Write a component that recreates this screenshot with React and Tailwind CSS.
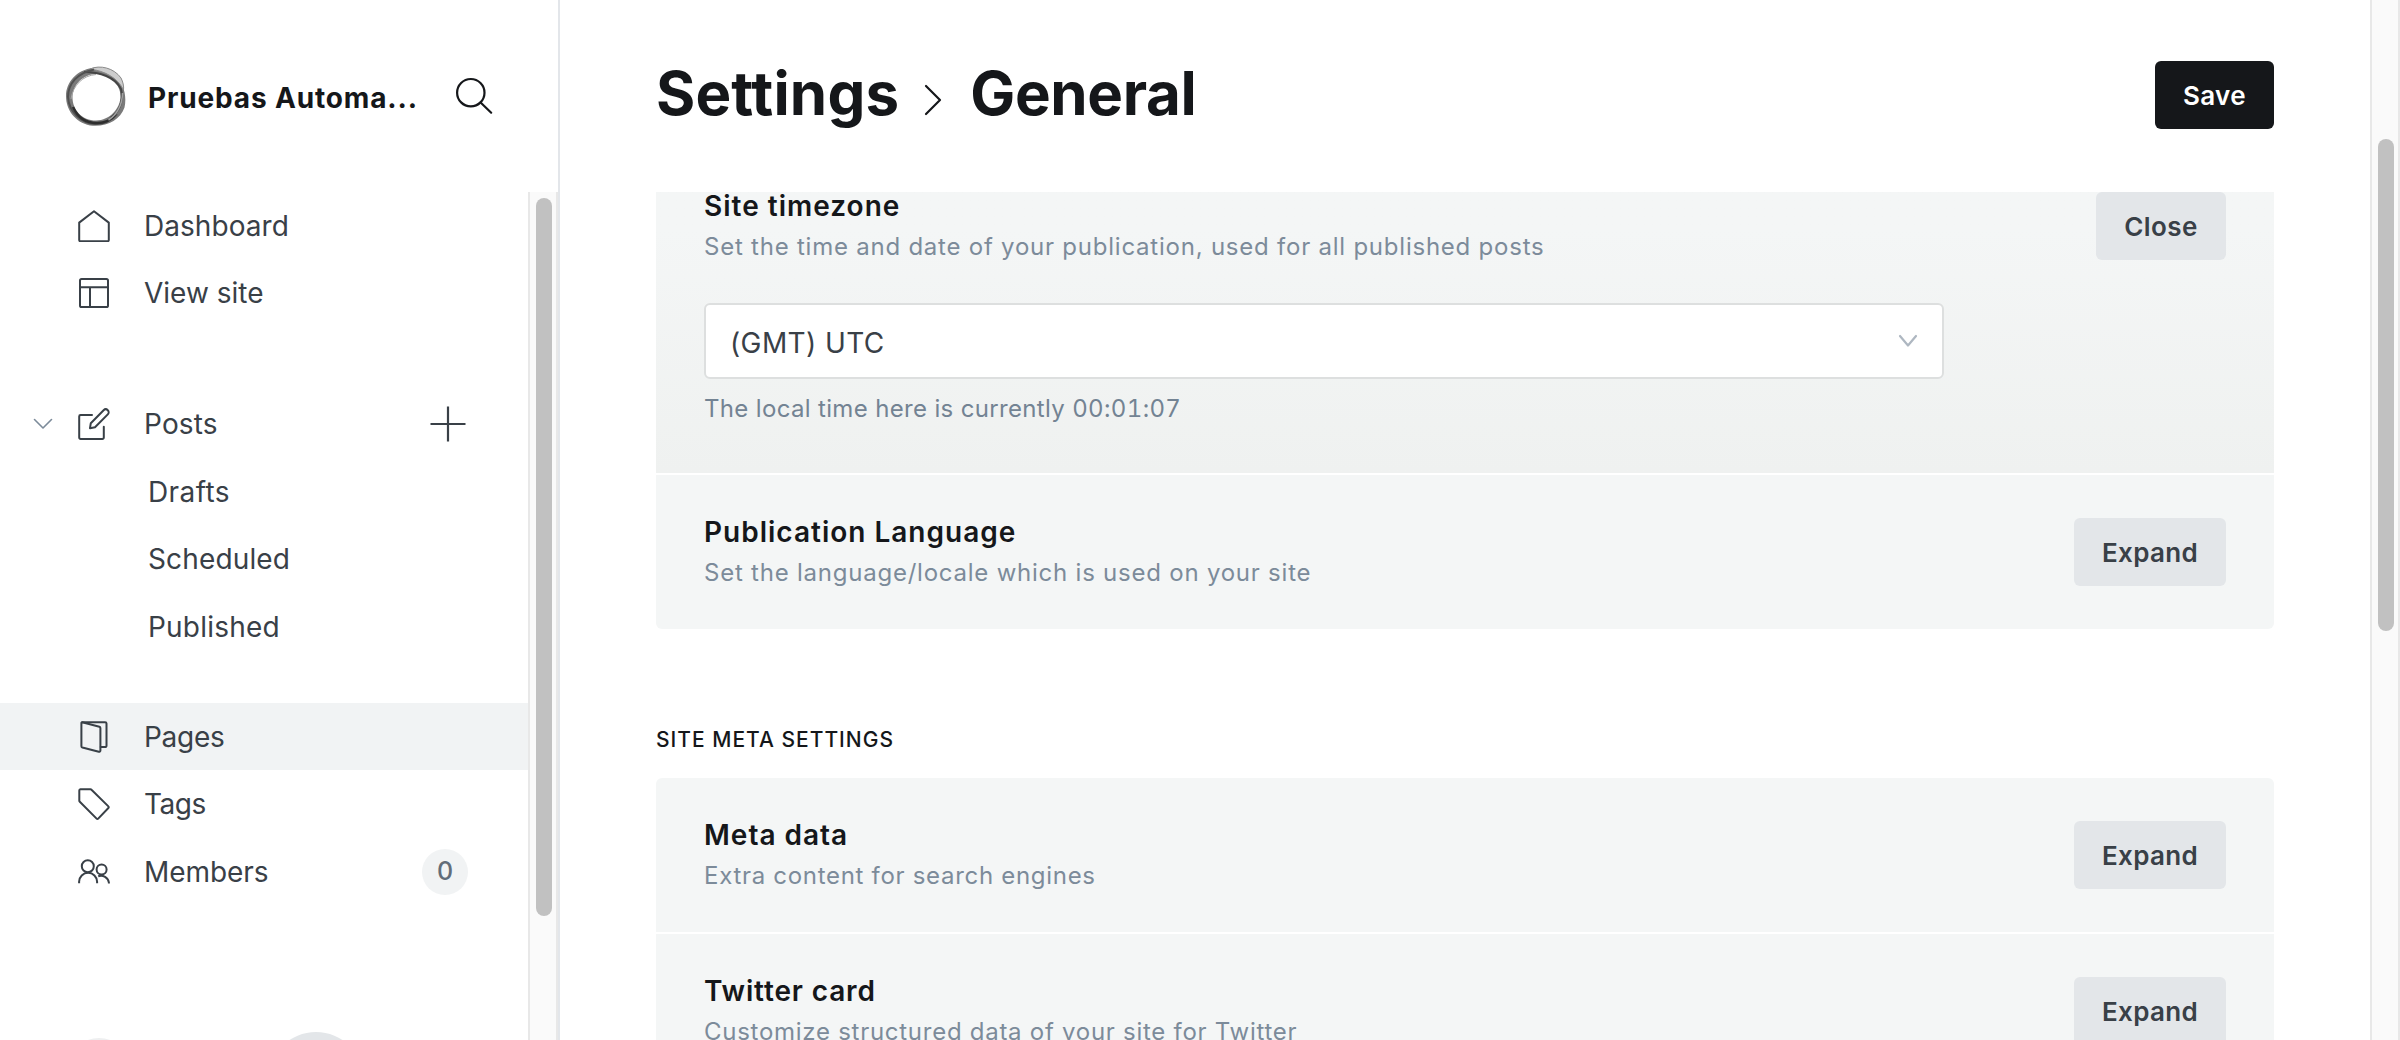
import React from "react";

const Icon = ({ children, className = "", size = 32 }) => (
  <svg
    width={size}
    height={size}
    viewBox={`0 0 ${size} ${size}`}
    fill="none"
    stroke="currentColor"
    strokeWidth="2"
    strokeLinecap="round"
    strokeLinejoin="round"
    className={`shrink-0 ${className}`}
  >
    {children}
  </svg>
);

const HomeIcon = () => (
  <Icon>
    <path d="M1.2 12.6 16 1.2l14.8 11.4V30a1.2 1.2 0 0 1-1.2 1.2H2.4A1.2 1.2 0 0 1 1.2 30Z" />
  </Icon>
);

const LayoutIcon = () => (
  <Icon>
    <rect x="2" y="2" width="28" height="28" rx="1.6" />
    <path d="M2 10.2h28M12 10.2V30" />
  </Icon>
);

const EditIcon = () => (
  <Icon>
    <path d="M14 7H2.6a1.4 1.4 0 0 0-1.4 1.4v21.2A1.4 1.4 0 0 0 2.6 31h21.8a1.4 1.4 0 0 0 1.4-1.4V18.8" />
    <path d="m12 20.2.8-5L25.6 2.2a2.9 2.9 0 0 1 4.2 4.2L17 19.2Z" />
  </Icon>
);

const PagesIcon = () => (
  <Icon className="mt-[2px]">
    <path d="M4.2 1.2 21.4 5.8a1.4 1.4 0 0 1 1 1.3v22.4a1.3 1.3 0 0 1-1.6 1.3L4.4 26.5a1.4 1.4 0 0 1-1-1.3V2a.8.8 0 0 1 .8-.8Z" />
    <path d="M4.2 1.2h22.9a1.4 1.4 0 0 1 1.4 1.4v22.1a1.4 1.4 0 0 1-1.4 1.4h-4.4" />
  </Icon>
);

const TagIcon = () => (
  <Icon>
    <path d="M2.4 1.2h10a1.6 1.6 0 0 1 1.1.5l16.9 16.7a1.1 1.1 0 0 1 0 1.6L20.2 30.6a1.1 1.1 0 0 1-1.6 0L1.8 13.8a1.8 1.8 0 0 1-.5-1.2V2.4a1.2 1.2 0 0 1 1.1-1.2Z" />
  </Icon>
);

const MembersIcon = () => (
  <Icon className="mt-[2px]">
    <circle cx="9.8" cy="10.2" r="6" />
    <path d="M1.1 27.2v-1.4a9 9 0 0 1 18 0v1.4" strokeLinecap="butt" />
    <circle cx="23.6" cy="13.6" r="5" />
    <path d="M20.2 20.2a8 8 0 0 1 10.7 6.4v.8" strokeLinecap="butt" />
  </Icon>
);

function NavItem({ icon, label, tracking = "tracking-[0.15px]", active, before, after }) {
  return (
    <a className={`flex h-[67.2px] items-center ${active ? "bg-[#f1f3f4]" : ""}`}>
      <span className="flex w-[78px] shrink-0 items-center pl-[33px]">{before}</span>
      {icon}
      <span className={`ml-[34px] flex-1 pt-px ${tracking}`}>{label}</span>
      {after}
    </a>
  );
}

const SubItem = ({ label, tracking }) => (
  <a className={`flex h-[67.2px] items-center pt-[2px] pl-[148px] ${tracking}`}>{label}</a>
);

const Logo = () => (
  <svg width="62" height="62" viewBox="0 0 62 62" fill="none" className="shrink-0">
    <path
      fillRule="evenodd"
      fill="#7a7a7a"
      d="M27 3C12 5 1 17 1 31s9 26 24 29.500c16 2 30-5 34.500-18C62 31 59 18 49 10 42 5 35 2 27 3ZM31.500 9C44 9 55.500 19 55.500 31S45 55.500 31 55.500 7.500 45 7.500 32.500 18 9 31.500 9Z"
    />
    <path d="M25 4C35-.500 49 3 56 13c2 4 3 8 2.500 12C53 13 40 6 25 4Z" fill="#cdcdcd" stroke="#8a8a8a" strokeWidth="1" />
    <path d="M19 7c16 0 31 5 37 17 3 12-2 24-11 29" stroke="#454545" strokeWidth="2" />
    <path d="M29 4.500C12 8 3 19 3 32c1 15 13 26 27 27 9 0 17-4 22-10" stroke="#505050" strokeWidth="2" />
    <path d="M8 42c5 11 13 16 24 16 8 0 14-3 18-8" stroke="#2e2e2e" strokeWidth="2.500" />
    <path d="M31 9.500C18 10.500 8 20 6 34" stroke="#a8a8a8" strokeWidth="1" />
    <path d="M57.500 28c0 12-6 22-14 27" stroke="#a2a2a2" strokeWidth="1.500" />
  </svg>
);

function Sidebar() {
  return (
    <aside className="flex h-full w-[560px] shrink-0 flex-col border-r-2 border-[#e3e6ea] text-[28px] text-[#394047]">
      <header className="flex h-[192px] shrink-0 items-start pl-[65px] pt-[65px]">
        <Logo />
        <div className="ml-[21px] mt-[13px] w-[290px] text-[28px] leading-[40px] font-bold tracking-[0.85px] whitespace-nowrap text-[#15171a]">
          Pruebas Automa...
        </div>
        <Icon size={40} className="ml-[16px] mt-[11px] text-[#15171a]">
          <g strokeWidth="2.2">
            <circle cx="16.8" cy="16.7" r="13.7" />
            <path d="m26.6 26.5 10.6 10.2" />
          </g>
        </Icon>
      </header>
      <div className="flex min-h-0 flex-1">
        <nav className="min-w-0 flex-1 overflow-hidden">
          <NavItem icon={<HomeIcon />} label="Dashboard" tracking="tracking-[0.05px]" />
          <NavItem icon={<LayoutIcon />} label="View site" tracking="tracking-[0px]" />
          <div className="mt-[64px]">
            <NavItem
              icon={<EditIcon />}
              label="Posts"
              before={
                <svg width="20" height="12" viewBox="0 0 20 12" fill="none" stroke="#7c8b9a" strokeWidth="1.6" strokeLinecap="round" strokeLinejoin="round">
                  <path d="m1.5 1.5 8.5 8.5 8.5-8.5" />
                </svg>
              }
              after={
                <Icon size={36} className="mr-[62px]">
                  <path d="M18 .5v35M.5 18h35" strokeWidth="2.2" strokeLinecap="butt" />
                </Icon>
              }
            />
            <SubItem label="Drafts" tracking="tracking-[0.4px]" />
            <SubItem label="Scheduled" tracking="tracking-[0.15px]" />
            <SubItem label="Published" tracking="tracking-[0.2px]" />
          </div>
          <div className="mt-[43.6px]">
            <NavItem icon={<PagesIcon />} label="Pages" tracking="tracking-[-0.3px]" active />
            <NavItem icon={<TagIcon />} label="Tags" tracking="tracking-[-0.5px]" />
            <NavItem
              icon={<MembersIcon />}
              label="Members"
              tracking="mt-[2px] tracking-[-0.05px]"
              after={
                <span className="mt-[2px] mr-[60px] flex h-[46px] w-[46px] items-center justify-center rounded-full bg-[#f1f3f4] pt-px text-[25px] font-medium text-[#626d79]">
                  0
                </span>
              }
            />
          </div>
          <div className="mt-[128px] flex items-start pl-[67px]">
            <span className="mt-[6px] h-[64px] w-[64px] rounded-full bg-[#eeeff0]" />
            <span className="ml-[137px] h-[96px] w-[96px] rounded-full bg-[#e3e6e9]" />
          </div>
        </nav>
        <div className="w-[30px] shrink-0 border-x-2 border-[#e8e8e8] bg-[#fafafa] pt-[6px] pl-[6px]">
          <div className="h-[718px] w-[16px] rounded-full bg-[#c1c1c1]" />
        </div>
      </div>
    </aside>
  );
}

const GreyButton = ({ children, className }) => (
  <button
    className={`flex h-[68px] shrink-0 items-center justify-center rounded-[6px] bg-[#e3e6e9] text-[26px] font-semibold text-[#394047] ${className}`}
  >
    {children}
  </button>
);

function SettingHeader({ title, description, action = "Expand", titleTracking = "tracking-[1px]", descTracking = "tracking-[0.77px]" }) {
  return (
    <div className="flex h-[154px] items-start justify-between px-[48px] pt-[43px]">
      <div>
        <h4 className={`text-[28px] leading-[28px] font-semibold text-[#15171a] ${titleTracking}`}>{title}</h4>
        <p className={`mt-[9px] text-[24px] leading-[36px] text-[#7c8b9a] ${descTracking}`}>{description}</p>
      </div>
      <GreyButton className={action === "Close" ? "w-[130px] tracking-[0.4px]" : "w-[152px] tracking-[0.3px]"}>
        {action}
      </GreyButton>
    </div>
  );
}

function Main() {
  return (
    <main className="flex h-full w-[1810px] shrink-0 flex-col pr-[96px] pl-[96px]">
      <header className="flex h-[192px] shrink-0 items-start justify-between pt-[61px]">
        <h2 className="-mt-px flex h-[66px] items-center text-[60px] leading-[66px] font-bold text-[#15171a]">
          <span className="tracking-[0.15px]">Settings</span>
          <svg width="20" height="34" viewBox="0 0 20 34" fill="none" stroke="currentColor" strokeWidth="2.2" strokeLinecap="round" strokeLinejoin="round" className="mt-[13px] ml-[24px]">
            <path d="m3 3 14 14L3 31" />
          </svg>
          <span className="ml-[27px] tracking-[-0.35px]">General</span>
        </h2>
        <button className="h-[68px] w-[119px] rounded-[6px] bg-[#15171a] text-[26px] font-semibold tracking-[0.4px] text-white">
          Save
        </button>
      </header>
      <div className="min-h-0 flex-1 overflow-hidden">
        <section className="-mt-[43px] overflow-hidden rounded-[6px]">
          <div className="h-[324px] bg-linear-to-b from-[#f4f6f6] from-25% to-[#eff1f0]">
            <SettingHeader
              title="Site timezone"
              description="Set the time and date of your publication, used for all published posts"
              action="Close"
            />
            <div className="pl-[48px]">
              <div className="flex h-[76px] w-[1240px] items-center justify-between rounded-[6px] border-2 border-[#dddfdf] bg-white pr-[24px] pl-[24px] text-[28px] tracking-[0.4px] text-[#394047]">
                <span className="pt-[3px]">(GMT) UTC</span>
                <svg width="20" height="14" viewBox="0 0 20 14" fill="none" stroke="#aeb7c1" strokeWidth="2.2" strokeLinecap="round" strokeLinejoin="round">
                  <path d="m2 2 8 9.5L18 2" />
                </svg>
              </div>
              <p className="mt-[12px] text-[24px] leading-[36px] tracking-[0.34px] text-[#738393]">
                The local time here is currently <span className="tracking-[0.35px] tabular-nums">00:01:07</span>
              </p>
            </div>
          </div>
          <div className="mt-[2px] bg-[#f4f6f6]">
            <SettingHeader
              title="Publication Language"
              description="Set the language/locale which is used on your site"
            />
          </div>
        </section>
        <h3 className="mt-[97px] text-[21px] leading-[28px] font-medium tracking-[1px] text-[#15171a]">
          SITE META SETTINGS
        </h3>
        <section className="mt-[24px] overflow-hidden rounded-[6px]">
          <div className="bg-[#f4f6f6]">
            <SettingHeader
              title="Meta data"
              description="Extra content for search engines"
              descTracking="tracking-[0.7px]"
            />
          </div>
          <div className="mt-[2px] bg-[#f4f6f6]">
            <SettingHeader
              title="Twitter card"
              description="Customize structured data of your site for Twitter"
              titleTracking="tracking-[0.85px]"
              descTracking="tracking-[0.73px]"
            />
          </div>
        </section>
      </div>
    </main>
  );
}

export default function App() {
  return (
    <div className="flex h-[1040px] w-[2400px] overflow-hidden bg-white font-['Inter',sans-serif]">
      <Sidebar />
      <Main />
      <div className="w-[30px] shrink-0 border-x-2 border-[#e8e8e8] bg-[#fafafa] pt-[139px] pl-[6px]">
        <div className="h-[492px] w-[16px] rounded-full bg-[#c1c1c1]" />
      </div>
    </div>
  );
}
